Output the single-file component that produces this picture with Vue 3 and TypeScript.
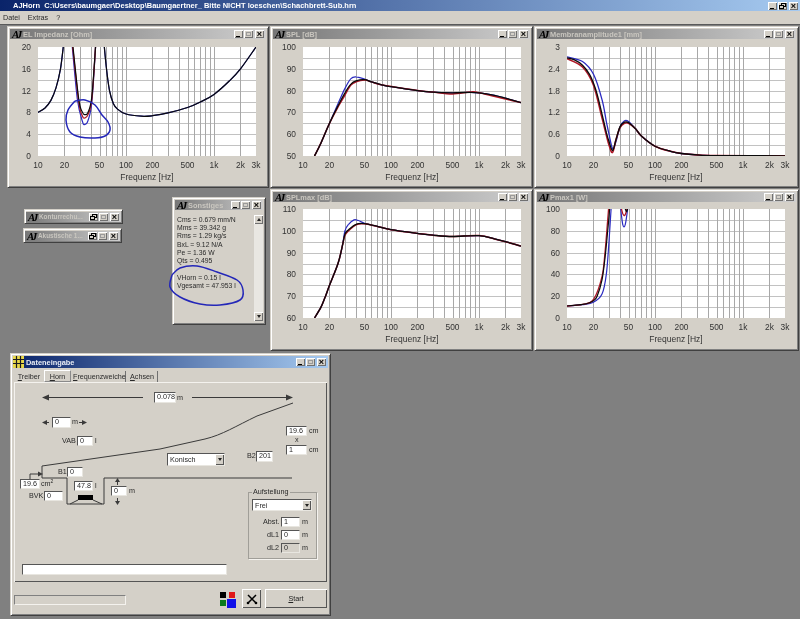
<template>
  <div class="desktop">
    <div class="app-title">
      <span class="app-name">AJHorn&nbsp; C:\Users\baumgaer\Desktop\Baumgaertner_ Bitte NICHT loeschen\Schachbrett-Sub.hrn</span>
      <span class="caps"><span class="cap min"></span><span class="cap restore"></span><span class="cap close">×</span></span>
    </div>
    <div class="menubar">
      <span>Datei</span>
      <span>Extras</span>
      <span>?</span>
    </div>

    <div class="mdi">
      <!-- chart windows -->
      <div
        v-for="p in plots"
        :key="p.title"
        class="win"
        :style="{ left: p.x + 'px', top: p.y + 'px', width: p.w + 'px', height: '162px' }"
      >
        <div class="title">
          <span class="aj">AJ</span>
          <span class="title-text">{{ p.title }}</span>
          <span class="caps"><span class="cap min"></span><span class="cap max"></span><span class="cap close">×</span></span>
        </div>
        <svg class="plot" :width="p.w - 6" height="146">
          <g :transform="`translate(${p.px} ${p.py})`">
            <rect width="218" height="109" fill="#fff" />
            <line v-for="y in hGrid" :key="'h' + y" x1="0" x2="218" :y1="y" :y2="y" class="grid-h" />
            <line v-for="x in vGrid" :key="'v' + x" y1="0" y2="109" :x1="x" :x2="x" class="grid-v" />
            <g :clip-path="`url(#clip-${p.id})`">
              <path
                v-for="(c, i) in p.curves"
                :key="i"
                :d="c.d"
                :stroke="c.color"
                :stroke-width="c.width"
                fill="none"
              />
            </g>
            <clipPath :id="`clip-${p.id}`"><rect width="218" height="109" /></clipPath>
            <text v-for="l in p.yLabels" :key="l.text" x="-7" :y="l.y + 3" text-anchor="end">{{ l.text }}</text>
            <text v-for="l in xLabels" :key="l.text" :x="l.x" y="121" text-anchor="middle">{{ l.text }}</text>
            <text x="109" y="133" text-anchor="middle" class="axis-name">Frequenz [Hz]</text>
          </g>
        </svg>
      </div>

      <!-- minimised windows -->
      <div class="win mini mini-a">
        <div class="title">
          <span class="aj">AJ</span>
          <span class="title-text">Konturrechu...</span>
          <span class="caps"><span class="cap restore"></span><span class="cap max"></span><span class="cap close">×</span></span>
        </div>
      </div>
      <div class="win mini mini-b">
        <div class="title">
          <span class="aj">AJ</span>
          <span class="title-text">Akustische 1...</span>
          <span class="caps"><span class="cap restore"></span><span class="cap max"></span><span class="cap close">×</span></span>
        </div>
      </div>

      <!-- text output window -->
      <div class="win misc">
        <div class="title">
          <span class="aj">AJ</span>
          <span class="title-text">Sonstiges</span>
          <span class="caps"><span class="cap min"></span><span class="cap max"></span><span class="cap close">×</span></span>
        </div>
        <div class="misc-body">
          <div class="misc-text">
            <div v-for="l in miscLines" :key="l">{{ l }}</div>
            <div class="misc-gap"></div>
            <div v-for="l in miscVolumes" :key="l">{{ l }}</div>
          </div>
          <div class="scrollbar">
            <span class="sb-btn"><i class="tri-up"></i></span>
            <span class="sb-track"></span>
            <span class="sb-btn"><i class="tri-down"></i></span>
          </div>
        </div>
      </div>

      <!-- input form -->
      <div class="win form">
        <div class="title active">
          <svg class="form-icon" width="11" height="12" viewBox="0 0 11 12">
            <rect width="11" height="12" fill="#e8d84a" />
            <path d="M0 3.5h11M0 7.5h11M3.5 0v12M7.5 0v12" stroke="#1a1a20" stroke-width="1.2" />
          </svg>
          <span class="title-text">Dateneingabe</span>
          <span class="caps"><span class="cap min"></span><span class="cap max"></span><span class="cap close">×</span></span>
        </div>
        <div class="tabs">
          <span class="tab t1"><u>T</u>reiber</span>
          <span class="tab t2 on"><u>H</u>orn</span>
          <span class="tab t3"><u>F</u>requenzweiche</span>
          <span class="tab t4"><u>A</u>chsen</span>
        </div>
        <div class="panel">
          <svg class="horn" width="313" height="200" viewBox="14 381 313 200">
            <g stroke="#3a3a3a" fill="none" stroke-width="1">
              <path d="M48 396.5H143M192 396.5H288" />
              <path d="M43 421.5H49M79 421.5H85" />
              <path d="M42 477V465L160 448L205 438C222 434 236 425 257 415L293 402" />
              <path d="M42 477H67V503H104V477H292" />
              <path d="M70 503L78 499M93 499L102 503" />
              <path d="M30 478V473H39" />
              <path d="M117.5 480V484M117.5 497V501" />
            </g>
            <g fill="#3a3a3a">
              <path d="M42 396.5l7-3v6z" />
              <path d="M293 396.5l-7-3v6z" />
              <path d="M42 421.5l5-2.5v5z" />
              <path d="M87 421.5l-5-2.5v5z" />
              <path d="M43 473l-5-2.5v5z" />
              <path d="M117.5 477l-2.5 4h5z" />
              <path d="M117.5 504l-2.5-4h5z" />
            </g>
            <rect x="78" y="494" width="15" height="5" fill="#000" />
          </svg>

          <span
            v-for="f in fields"
            :key="f.x + '-' + f.y"
            class="field"
            :class="{ off: f.off }"
            :style="place(f.x, f.y, f.w, f.h ?? 10)"
          >{{ f.v }}</span>
          <span
            v-for="l in labels"
            :key="l.x + '-' + l.y"
            class="lbl"
            :style="place(l.x, l.y - 5)"
          >{{ l.t }}<sup v-if="l.sup">2</sup></span>
          <span class="lbl cross" :style="place(295, 434)">x</span>

          <span class="combo" :style="place(167, 452, 58, 13)">
            Konisch<i class="drop"><b class="tri-down"></b></i>
          </span>

          <div class="group" :style="place(248, 491, 69, 67)"><span class="legend">Aufstellung</span></div>
          <span class="combo" :style="place(252, 498, 60, 12)">
            Frei<i class="drop"><b class="tri-down"></b></i>
          </span>

          <span class="field" :style="place(22, 563, 205, 11)"></span>
        </div>

        <div class="footer">
          <span class="progress"></span>
          <span class="swatches">
            <i class="sw black"></i><i class="sw red"></i>
            <i class="sw green"></i><i class="sw blue"></i>
          </span>
          <button class="btn tool">
            <svg width="12" height="12" viewBox="0 0 12 12">
              <path d="M2 2L10 10M10 2L2 10" stroke="#000" stroke-width="1.5" />
              <circle cx="2" cy="10" r="1.3" fill="#000" />
              <circle cx="10" cy="10" r="1.3" fill="#000" />
            </svg>
          </button>
          <button class="btn start"><u>S</u>tart</button>
        </div>
      </div>
    </div>

    <!-- hand drawn marks on top of everything -->
    <svg class="marks" width="800" height="619">
      <path v-for="(d, i) in marks" :key="i" :d="d" fill="none" stroke="#2427b8" stroke-width="1.5" />
    </svg>
  </div>
</template>

<script setup lang="ts">
type Pt = [number, number]

interface CurveDef {
  color: string
  width: number
  segs: Pt[][]
}

interface PlotDef {
  id: string
  title: string
  x: number
  y: number
  w: number
  px: number
  py: number
  min: number
  max: number
  curves: CurveDef[]
}

const BLUE = '#2a2ac0'
const RED = '#b01828'
const BLACK = '#0a0a0a'

const xOf = (f: number) => 88 * Math.log10(f / 10)

// catmull-rom through the points so the curves stay round
function smooth(pts: Pt[]): string {
  let d = `M${pts[0][0].toFixed(1)} ${pts[0][1].toFixed(1)}`
  for (let i = 0; i < pts.length - 1; i++) {
    const p0 = pts[Math.max(i - 1, 0)]
    const p1 = pts[i]
    const p2 = pts[i + 1]
    const p3 = pts[Math.min(i + 2, pts.length - 1)]
    const c1x = p1[0] + (p2[0] - p0[0]) / 6
    const c1y = p1[1] + (p2[1] - p0[1]) / 6
    const c2x = p2[0] - (p3[0] - p1[0]) / 6
    const c2y = p2[1] - (p3[1] - p1[1]) / 6
    d += `C${c1x.toFixed(1)} ${c1y.toFixed(1)} ${c2x.toFixed(1)} ${c2y.toFixed(1)} ${p2[0].toFixed(1)} ${p2[1].toFixed(1)}`
  }
  return d
}

const impLeft: Pt[] = [[10, 8], [12, 8.8], [14, 10.2], [16, 12.5], [18, 16], [19.7, 21]]
const impRight: Pt[] = [
  [56, 21], [60, 16], [65, 12], [72, 9.6], [80, 8.6], [100, 7.7], [150, 7.3], [200, 7.4],
  [300, 7.9], [500, 8.9], [700, 9.9], [1000, 11.3], [1500, 13.8], [2000, 16], [3000, 20]
]

const splTail: Pt[] = [[80, 82.5], [100, 81.8], [200, 80], [300, 79.3], [500, 79], [800, 79.2], [1000, 79], [1500, 77.8], [2000, 76.5], [3000, 74.5]]
const splHead: Pt[] = [[13.5, 50], [16, 56], [20, 65]]

const memTail: Pt[] = [[60, 0.75], [70, 0.55], [100, 0.27], [150, 0.13], [200, 0.07], [300, 0.03], [500, 0.012], [3000, 0.005]]

const maxTail: Pt[] = [[70, 102], [100, 100.5], [200, 98.8], [300, 98], [500, 97.4], [1000, 97.8], [1500, 96.3], [2000, 95], [3000, 93]]
const maxHead: Pt[] = [[13.5, 60], [16, 65], [18, 70], [20, 75], [25, 85], [28, 93]]

const defs: PlotDef[] = [
  {
    id: 'imp', title: 'EL Impedanz [Ohm]', x: 7, y: 1, w: 262, px: 28, py: 8, min: 0, max: 20,
    curves: [
      { color: BLUE, width: 1.2, segs: [impLeft, [[24.2, 21], [28, 10.5], [32, 6.3], [34, 5.8], [37, 6.5], [41, 10], [45.5, 21]], impRight] },
      { color: RED, width: 1.3, segs: [[[24.4, 21], [29, 10], [32, 7.3], [34, 7], [37, 7.6], [41, 10.5], [45.5, 21]]] },
      { color: BLACK, width: 1.2, segs: [impLeft, [[24.6, 21], [29, 10.5], [32, 8], [34, 7.6], [37, 8], [41, 11], [45.5, 21]], impRight] }
    ]
  },
  {
    id: 'spl', title: 'SPL [dB]', x: 270, y: 1, w: 263, px: 30, py: 8, min: 50, max: 100,
    curves: [
      { color: BLUE, width: 1.2, segs: [[...splHead, [25, 74], [30, 81], [35, 85.5], [40, 86.3], [50, 85.3], [60, 84], ...splTail]] },
      { color: RED, width: 1.5, segs: [[...splHead, [25, 72.5], [30, 78], [35, 82.5], [40, 84], [50, 84.8], [60, 84], [80, 82.5], [200, 80], [300, 79.3], [500, 78.5], [800, 79.4], [1000, 79], [3000, 74.5]]] },
      { color: BLACK, width: 1.3, segs: [[...splHead, [25, 73], [30, 79], [35, 83], [40, 84.5], [50, 85], [60, 84], ...splTail]] }
    ]
  },
  {
    id: 'mem', title: 'Membranamplitude1 [mm]', x: 534, y: 1, w: 265, px: 30, py: 8, min: 0, max: 3,
    curves: [
      { color: BLUE, width: 1.3, segs: [[[10, 2.73], [15, 2.6], [20, 2.25], [25, 1.55], [28, 0.95], [30, 0.6], [33, 0.2], [36, 0.4], [40, 0.8], [45, 0.97], [50, 0.95], ...memTail]] },
      { color: RED, width: 1.6, segs: [[[10, 2.68], [15, 2.45], [20, 1.95], [25, 1.05], [30, 0.3], [33, 0.1], [36, 0.45], [40, 0.78], [45, 0.9], [50, 0.9], ...memTail]] },
      { color: BLACK, width: 1.3, segs: [[[10, 2.7], [12, 2.65], [15, 2.5], [18, 2.25], [20, 2], [22, 1.7], [25, 1.15], [28, 0.65], [30, 0.4], [33, 0.15], [36, 0.45], [40, 0.8], [45, 0.93], [50, 0.92], ...memTail]] }
    ]
  },
  {
    id: 'max', title: 'SPLmax [dB]', x: 270, y: 164, w: 263, px: 30, py: 7, min: 60, max: 110,
    curves: [
      { color: BLUE, width: 1.2, segs: [[...maxHead, [30, 100], [33, 103], [38, 105], [42, 104.8], [50, 103.5], ...maxTail]] },
      { color: RED, width: 1.5, segs: [[...maxHead, [30, 98], [33, 100], [40, 102.8], [50, 103.2], ...maxTail]] },
      { color: BLACK, width: 1.3, segs: [[...maxHead, [30, 98.5], [33, 100.5], [40, 103], [50, 103.3], ...maxTail]] }
    ]
  },
  {
    id: 'pmax', title: 'Pmax1 [W]', x: 534, y: 164, w: 265, px: 30, py: 7, min: 0, max: 100,
    curves: [
      { color: BLUE, width: 1.2, segs: [[[10, 11], [15, 12.3], [20, 14.5], [25, 22], [28, 40], [30, 70], [32, 106]], [[40, 106], [43, 86], [46, 86], [50, 106]]] },
      { color: RED, width: 1.3, segs: [[[10, 11], [15, 12.5], [20, 17], [25, 38], [27, 60], [29, 90], [30, 106]], [[40, 106], [43, 96], [46, 95], [50, 106]]] },
      { color: BLACK, width: 1.2, segs: [[[10, 11], [15, 12.5], [18, 14], [20, 16], [22, 20], [25, 35], [27, 55], [29, 80], [31, 106]], [[44, 106], [46, 100], [48, 98], [50, 106]]] }
    ]
  }
]

const plots = defs.map((p) => {
  const yOf = (v: number) => 109 * (1 - (v - p.min) / (p.max - p.min))
  return {
    ...p,
    curves: p.curves.map((c) => ({
      color: c.color,
      width: c.width,
      d: c.segs.map((s) => smooth(s.map(([f, v]): Pt => [xOf(f), yOf(v)]))).join('')
    })),
    yLabels: [0, 1, 2, 3, 4, 5].map((i) => {
      const v = p.min + (i * (p.max - p.min)) / 5
      return { text: String(+v.toFixed(1)), y: yOf(v) }
    })
  }
})

const vGrid = [20, 30, 40, 50, 60, 70, 80, 90, 100, 200, 300, 400, 500, 600, 700, 800, 900, 1000, 2000].map(
  (f) => Math.round(xOf(f)) + 0.5
)
const hGrid = [1, 2, 3, 4, 5, 6, 7, 8, 9].map((i) => Math.round(i * 10.9) + 0.5)
const xLabels = [
  { f: 10, text: '10' }, { f: 20, text: '20' }, { f: 50, text: '50' }, { f: 100, text: '100' },
  { f: 200, text: '200' }, { f: 500, text: '500' }, { f: 1000, text: '1k' }, { f: 2000, text: '2k' },
  { f: 3000, text: '3k' }
].map((l) => ({ text: l.text, x: xOf(l.f) }))

const miscLines = ['Cms = 0.679 mm/N', 'Mms = 39.342 g', 'Rms = 1.29 kg/s', 'BxL = 9.12 N/A', 'Pe = 1.36 W', 'Qts = 0.495']
const miscVolumes = ['VHorn = 0.15 l', 'Vgesamt = 47.953 l']

const marks = [
  smooth([[75, 101], [85, 100], [95, 105], [102, 115], [108, 122], [110, 130], [105, 136], [95, 138], [80, 137], [70, 132], [66, 120], [68, 110], [75, 101]]),
  smooth([[172, 275], [180, 268], [197, 266], [217, 272], [237, 280], [243, 290], [240, 300], [220, 305], [200, 304], [180, 297], [170, 287], [172, 275]])
]

// horn dialog: positions are screen pixels, the panel starts at 14/381
const place = (x: number, y: number, w?: number, h?: number) => ({
  left: x - 14 + 'px',
  top: y - 381 + 'px',
  ...(w !== undefined ? { width: w + 'px' } : {}),
  ...(h !== undefined ? { height: h + 'px' } : {})
})

interface FieldDef {
  x: number
  y: number
  w: number
  h?: number
  v: string
  off?: boolean
}

const fields: FieldDef[] = [
  { x: 154, y: 391, w: 22, h: 11, v: '0.078' },
  { x: 52, y: 416, w: 19, h: 11, v: '0' },
  { x: 77, y: 435, w: 16, v: '0' },
  { x: 67, y: 466, w: 16, v: '0' },
  { x: 20, y: 478, w: 20, v: '19.6' },
  { x: 44, y: 490, w: 19, v: '0' },
  { x: 74, y: 480, w: 19, v: '47.8' },
  { x: 111, y: 485, w: 16, v: '0' },
  { x: 256, y: 450, w: 17, h: 11, v: '201' },
  { x: 286, y: 425, w: 21, v: '19.6' },
  { x: 286, y: 444, w: 21, v: '1' },
  { x: 281, y: 516, w: 19, v: '1' },
  { x: 281, y: 529, w: 19, v: '0' },
  { x: 281, y: 542, w: 19, v: '0', off: true }
]

const labels: { x: number; y: number; t: string; sup?: boolean }[] = [
  { x: 177, y: 397, t: 'm' },
  { x: 72, y: 421, t: 'm' },
  { x: 62, y: 440, t: 'VAB' },
  { x: 95, y: 440, t: 'l' },
  { x: 58, y: 471, t: 'B1' },
  { x: 41, y: 483, t: 'cm', sup: true },
  { x: 29, y: 495, t: 'BVK' },
  { x: 95, y: 485, t: 'l' },
  { x: 129, y: 490, t: 'm' },
  { x: 247, y: 455, t: 'B2' },
  { x: 309, y: 430, t: 'cm' },
  { x: 309, y: 449, t: 'cm' },
  { x: 263, y: 521, t: 'Abst.' },
  { x: 302, y: 521, t: 'm' },
  { x: 267, y: 534, t: 'dL1' },
  { x: 302, y: 534, t: 'm' },
  { x: 267, y: 547, t: 'dL2' },
  { x: 302, y: 547, t: 'm' }
]
</script>

<style>
html,
body {
  margin: 0;
  background: #808080;
}
</style>

<style scoped>
.desktop {
  position: relative;
  width: 800px;
  height: 619px;
  overflow: hidden;
  display: flex;
  flex-direction: column;
  background: #808080;
  font-family: 'Liberation Sans', Arial, sans-serif;
  font-size: 7.2px;
  color: #2a2a2a;
  filter: blur(0.3px);
}

.app-title {
  height: 11px;
  flex: none;
  display: flex;
  align-items: center;
  padding-left: 13px;
  background: linear-gradient(90deg, #0a246a, #a6caf0);
  color: #fff;
  font-size: 7.5px;
  font-weight: bold;
}

.app-name {
  flex: 1;
  white-space: nowrap;
}

.menubar {
  height: 13px;
  flex: none;
  display: flex;
  align-items: center;
  gap: 8px;
  padding-left: 3px;
  background: #d4d0c8;
  border-bottom: 1px solid #5a5a5a;
}

.mdi {
  position: relative;
  flex: 1;
}

.win {
  position: absolute;
  box-sizing: border-box;
  padding: 2px;
  background: #d4d0c8;
  border: 1px solid;
  border-color: #d4d0c8 #404040 #404040 #d4d0c8;
  box-shadow: inset 1px 1px 0 #fff, inset -1px -1px 0 #808080;
  display: flex;
  flex-direction: column;
}

.title {
  height: 10px;
  flex: none;
  display: flex;
  align-items: center;
  padding-left: 2px;
  background: linear-gradient(90deg, #777, #cfcfcf);
  color: #c9c6bf;
  font-size: 7.4px;
  font-weight: bold;
  white-space: nowrap;
  overflow: hidden;
}

.title.active {
  height: 12px;
  padding-left: 0;
  background: linear-gradient(90deg, #0a246a, #a6caf0);
  color: #e8ecf4;
}

.aj {
  width: 9px;
  margin-right: 2px;
  font-family: 'Liberation Serif', serif;
  font-style: italic;
  font-size: 11px;
  letter-spacing: -2.5px;
  color: #000;
}

.form-icon {
  margin-right: 2px;
  flex: none;
}

.title-text {
  flex: 1;
  overflow: hidden;
}

.caps {
  display: flex;
  flex: none;
  gap: 1px;
  margin-right: 2px;
}

.cap {
  position: relative;
  width: 9px;
  height: 8px;
  box-sizing: border-box;
  background: #d4d0c8;
  box-shadow: inset 1px 1px 0 #fff, inset -1px -1px 0 #707070;
  color: #000;
  font-size: 9px;
  font-weight: bold;
  line-height: 8px;
  text-align: center;
}

.cap.close {
  margin-left: 1px;
}

.cap.min::after {
  content: '';
  position: absolute;
  left: 2px;
  bottom: 1px;
  width: 4px;
  height: 1px;
  background: #000;
}

.cap.max::after {
  content: '';
  position: absolute;
  left: 2px;
  top: 2px;
  width: 3px;
  height: 2px;
  border: 1px solid #9a9a9a;
}

.cap.restore::before,
.cap.restore::after {
  content: '';
  position: absolute;
  width: 3px;
  height: 2px;
  border: 1px solid #000;
  background: #d4d0c8;
}

.cap.restore::before {
  left: 3px;
  top: 1px;
}

.cap.restore::after {
  left: 1px;
  top: 3px;
}

.plot {
  display: block;
}

.plot text {
  font-family: 'Liberation Sans', Arial, sans-serif;
  font-size: 8.4px;
  fill: #333;
}

.plot .axis-name {
  font-size: 8.5px;
}

.grid-h {
  stroke: #c2c2c2;
  stroke-width: 1;
}

.grid-v {
  stroke: #a8a8a8;
  stroke-width: 1;
}

.mini {
  height: 15px;
  padding: 1px;
  justify-content: center;
}

.mini .title {
  font-size: 6.4px;
}

.mini .title-text {
  flex: none;
  width: 47px;
  margin-right: auto;
}

.mini-a {
  left: 24px;
  top: 184px;
  width: 99px;
}

.mini-b {
  left: 23px;
  top: 203px;
  width: 99px;
}

.misc {
  left: 172px;
  top: 172px;
  width: 94px;
  height: 128px;
}

.misc-body {
  flex: 1;
  display: flex;
  min-height: 0;
}

.misc-text {
  flex: 1;
  padding: 6px 0 0 2px;
  font-size: 6.8px;
  line-height: 8.2px;
  white-space: nowrap;
}

.misc-gap {
  height: 9px;
}

.scrollbar {
  width: 9px;
  margin: 5px 0 1px;
  display: flex;
  flex-direction: column;
}

.sb-btn {
  height: 9px;
  flex: none;
  display: flex;
  align-items: center;
  justify-content: center;
  background: #d4d0c8;
  box-shadow: inset 1px 1px 0 #fff, inset -1px -1px 0 #707070;
}

.sb-track {
  flex: 1;
  background: #e9e7e2;
}

.tri-up,
.tri-down {
  display: block;
  width: 0;
  height: 0;
  border-left: 2.5px solid transparent;
  border-right: 2.5px solid transparent;
}

.tri-up {
  border-bottom: 3px solid #222;
}

.tri-down {
  border-top: 3px solid #222;
}

.form {
  left: 10px;
  top: 328px;
  width: 321px;
  height: 263px;
}

.tabs {
  height: 13px;
  flex: none;
  margin-top: 1px;
  display: flex;
  align-items: flex-end;
  padding-left: 3px;
  white-space: nowrap;
}

.tab {
  height: 11px;
  line-height: 11px;
  box-sizing: border-box;
  text-align: center;
  border-right: 1px solid #707070;
}

.tab.t1 {
  width: 26px;
  border-right: none;
}

.tab.t2 {
  width: 27px;
  margin-left: 2px;
  height: 12px;
  border: 1px solid #8a8a8a;
  border-left-color: #fff;
  border-top-color: #fff;
}

.tab.t3 {
  width: 53px;
  margin-left: 2px;
}

.tab.t4 {
  width: 31px;
  margin-left: 1px;
}

.panel {
  position: relative;
  width: 313px;
  height: 200px;
  flex: none;
  margin-left: 1px;
  box-sizing: border-box;
  box-shadow: inset 1px 1px 0 #f4f2ee, inset -1px -1px 0 #555;
}

.horn {
  position: absolute;
  left: 0;
  top: 0;
}

.field {
  position: absolute;
  box-sizing: border-box;
  padding-left: 2px;
  background: #fff;
  border-top: 1px solid #555;
  border-left: 1px solid #555;
  border-right: 1px solid #e8e6e0;
  border-bottom: 1px solid #e8e6e0;
  line-height: 8px;
  white-space: nowrap;
  overflow: hidden;
}

.field.off {
  background: #d4d0c8;
}

.lbl {
  position: absolute;
  line-height: 10px;
  white-space: nowrap;
}

.lbl sup {
  font-size: 5px;
  line-height: 0;
}

.combo {
  position: absolute;
  box-sizing: border-box;
  padding-left: 2px;
  background: #fff;
  border-top: 1px solid #555;
  border-left: 1px solid #555;
  border-right: 1px solid #e8e6e0;
  border-bottom: 1px solid #e8e6e0;
  display: flex;
  align-items: center;
  justify-content: space-between;
}

.drop {
  width: 9px;
  height: 100%;
  display: flex;
  align-items: center;
  justify-content: center;
  background: #d4d0c8;
  box-shadow: inset 1px 1px 0 #fff, inset -1px -1px 0 #555;
}

.group {
  position: absolute;
  box-sizing: border-box;
  border: 1px solid #a09e98;
  box-shadow: 1px 1px 0 #f4f2ee;
}

.legend {
  position: absolute;
  left: 3px;
  top: -6px;
  padding: 0 1px;
  background: #d4d0c8;
  line-height: 10px;
}

.footer {
  flex: none;
  display: flex;
  align-items: center;
  width: 313px;
  margin: 7px 0 0 1px;
}

.progress {
  width: 112px;
  height: 10px;
  margin-top: 3px;
  box-sizing: border-box;
  border-top: 1px solid #808080;
  border-left: 1px solid #808080;
  border-right: 1px solid #f4f2ee;
  border-bottom: 1px solid #f4f2ee;
}

.swatches {
  width: 18px;
  height: 17px;
  margin-left: auto;
  display: grid;
  grid-template-columns: 9px 9px;
  grid-template-rows: 9px 8px;
  place-items: center;
}

.sw {
  display: block;
  width: 6px;
  height: 6px;
}

.sw.black {
  background: #000;
}

.sw.red {
  background: #e01818;
}

.sw.green {
  background: #0a7a1e;
}

.sw.blue {
  width: 9px;
  height: 9px;
  background: #1010e8;
}

.btn {
  height: 19px;
  padding: 0;
  border: none;
  background: #d4d0c8;
  box-shadow: inset 1px 1px 0 #fff, inset -1px -1px 0 #555;
  font: inherit;
  color: #222;
  display: flex;
  align-items: center;
  justify-content: center;
}

.tool {
  width: 19px;
  margin-left: 6px;
}

.start {
  width: 62px;
  margin-left: 4px;
}

.marks {
  position: absolute;
  left: 0;
  top: 0;
  pointer-events: none;
}
</style>
